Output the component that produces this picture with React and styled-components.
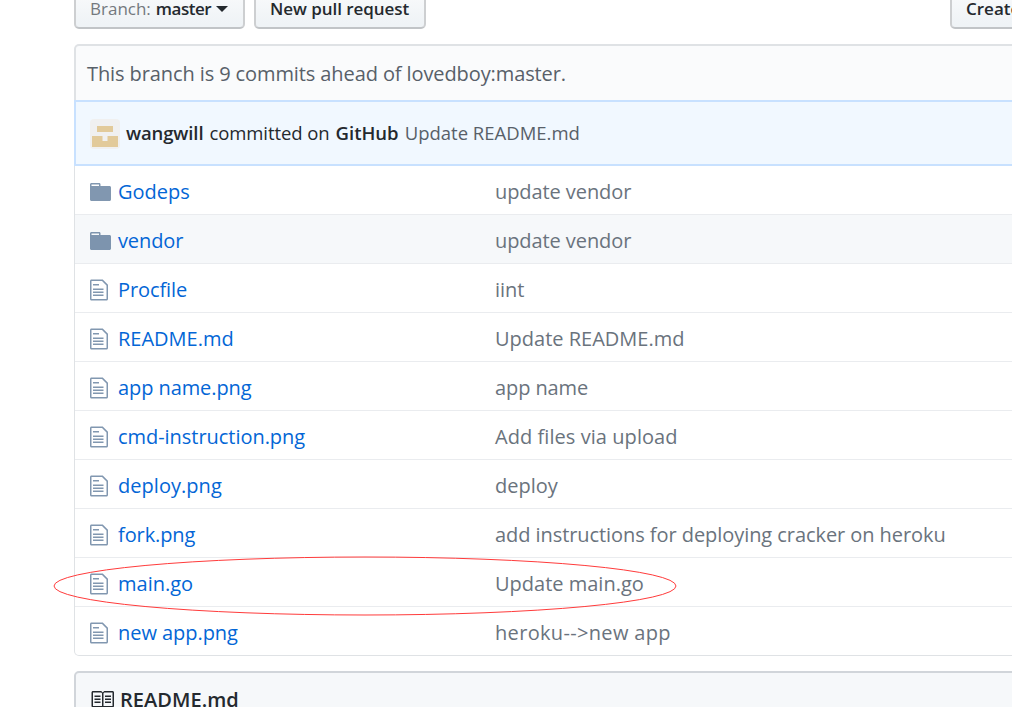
import React from 'react';
import styled, { createGlobalStyle } from 'styled-components';

const GlobalStyle = createGlobalStyle`
  * { box-sizing: border-box; }
  html, body { margin: 0; background: #fff; }
  body {
    width: 1012px;
    height: 707px;
    overflow: hidden;
    font-family: "Segoe UI", "Open Sans", "Noto Sans", sans-serif;
    font-size: 20px;
    color: #24292e;
  }
`;

const Page = styled.main`
  position: relative;
  width: 1012px;
  height: 707px;
  padding-left: 74px;
  overflow: hidden;
`;

const Toolbar = styled.div`
  display: flex;
  align-items: flex-end;
  gap: 9px;
  height: 29px;
`;

const Button = styled.button`
  display: flex;
  flex: none;
  align-items: center;
  width: ${(p) => p.$width}px;
  height: 42px;
  margin: 0 ${(p) => (p.$end ? '-24px' : '0')} 0 ${(p) => (p.$end ? 'auto' : '0')};
  padding: 1px 0 0 14px;
  border: 2px solid #cdcfd1;
  border-bottom-color: #c1c4c7;
  border-radius: 5px;
  background: linear-gradient(180deg, #fafbfc, #eff3f6 90%);
  color: #24292e;
  font: 600 17px/24px "Segoe UI", "Open Sans", "Noto Sans", sans-serif;
  white-space: nowrap;
`;

const ButtonLabel = styled.span`
  letter-spacing: ${(p) => p.$track || 0}px;
  font-weight: ${(p) => (p.$muted ? 400 : 600)};
  color: ${(p) => (p.$muted ? '#74797e' : '#24292e')};
  margin-right: ${(p) => p.$gap || 0}px;
`;

const Caret = styled.span`
  border: 6px solid transparent;
  border-top-color: #24292e;
  border-bottom: 0;
`;

const Panel = styled.section`
  width: 980px;
  margin-top: 15px;
`;

const Notice = styled.div`
  height: 56px;
  padding: 0 0 0 11px;
  border: 2px solid #dfe2e5;
  border-bottom: 0;
  border-radius: 5px 5px 0 0;
  background: #fafbfc;
  color: #586069;
  line-height: 56px;
  letter-spacing: -0.1px;
`;

const Commit = styled.div`
  display: flex;
  align-items: center;
  height: 66px;
  padding-left: 14px;
  border: 2px solid #c8e1ff;
  background: #f1f8ff;
  font-size: 18.5px;
`;

const Avatar = styled.svg`
  flex: none;
  width: 30px;
  height: 30px;
  margin: 2px 6px 0 0;
`;

const Phrase = styled.span`
  padding-bottom: 2px;
  letter-spacing: ${(p) => p.$track || 0}px;
  font-weight: ${(p) => (p.$strong ? 600 : 400)};
  color: ${(p) => (p.$muted ? '#586069' : '#24292e')};
  margin-right: 6px;
  white-space: nowrap;
`;

const Files = styled.div`
  border: 1px solid #dfe2e5;
  border-top: 0;
  border-radius: 0 0 5px 5px;
`;

const Row = styled.div`
  display: grid;
  grid-template-columns: 28px 377px 1fr;
  height: 49px;
  padding-left: 15px;
  border-bottom: 1px solid #eaecef;
  background: ${(p) => (p.$active ? '#f6f8fa' : 'transparent')};
  line-height: 52px;
  white-space: nowrap;
  &:last-child {
    height: 48px;
    border-bottom: 0;
  }
`;

const Icon = styled.svg`
  display: block;
  width: ${(p) => p.$width}px;
  height: 24px;
  margin-top: 14px;
  fill: rgba(3, 47, 98, 0.5);
`;

const FileLink = styled.a`
  color: #0366d6;
  letter-spacing: ${(p) => p.$track || 0}px;
`;

const Message = styled.span`
  color: #6a737d;
  letter-spacing: ${(p) => p.$track || 0}px;
`;

const Readme = styled.section`
  display: flex;
  width: 980px;
  height: 60px;
  margin-top: 15px;
  padding: 14px 0 0 14px;
  border: 2px solid #d1d5da;
  border-radius: 5px;
  background: #f6f8fa;
`;

const BookIcon = styled.svg`
  width: 24px;
  height: 24px;
  margin: 1px 6px 0 0;
  fill: #24292e;
`;

const ReadmeTitle = styled.h3`
  margin: 0;
  font-size: 20px;
  font-weight: 600;
  line-height: 26px;
  letter-spacing: 0.05px;
`;

const Highlight = styled.svg`
  position: absolute;
  left: 53px;
  top: 556px;
  width: 624px;
  height: 60px;
  fill: none;
  stroke: #ff3b3b;
  stroke-width: 1;
`;

const FILE =
  'M6 5H2V4h4v1zM2 8h7V7H2v1zm0 2h7V9H2v1zm0 2h7v-1H2v1zm10-7.5V14c0 .55-.45 1-1 1H1c-.55 0-1-.45-1-1V2c0-.55.45-1 1-1h7.5L12 4.5zM11 5L8 2H1v12h10V5z';
const FOLDER =
  'M13 4H7V3c0-.66-.31-1-1-1H1c-.55 0-1 .45-1 1v10c0 .55.45 1 1 1h12c.55 0 1-.45 1-1V5c0-.55-.45-1-1-1zM6 4H1V3h5v1z';
const BOOK =
  'M3 5h4v1H3V5zm0 3h4V7H3v1zm0 2h4V9H3v1zm11-5h-4v1h4V5zm0 2h-4v1h4V7zm0 2h-4v1h4V9zm2-6v9c0 .55-.45 1-1 1H9.5l-1 1-1-1H2c-.55 0-1-.45-1-1V3c0-.55.45-1 1-1h5.5l1 1 1-1H15c.55 0 1 .45 1 1zm-8 .5L7.5 3H2v9h6V3.5zm7-.5H9.5l-.5.5V12h6V3z';

const files = [
  { name: 'Godeps', message: 'update vendor', folder: true, messageTrack: -0.08 },
  { name: 'vendor', message: 'update vendor', folder: true, active: true, nameTrack: -0.12, messageTrack: -0.08 },
  { name: 'Procfile', message: 'iint', nameTrack: -0.1 },
  { name: 'README.md', message: 'Update README.md' },
  { name: 'app name.png', message: 'app name', nameTrack: -0.08, messageTrack: -0.1 },
  { name: 'cmd-instruction.png', message: 'Add files via upload', nameTrack: -0.04, messageTrack: 0.06 },
  { name: 'deploy.png', message: 'deploy', nameTrack: 0.04 },
  { name: 'fork.png', message: 'add instructions for deploying cracker on heroku', nameTrack: -0.1, messageTrack: -0.065 },
  { name: 'main.go', message: 'Update main.go' },
  { name: 'new app.png', message: 'heroku-->new app', nameTrack: -0.05, messageTrack: 0.33 },
];

export default function App() {
  return (
    <>
      <GlobalStyle />
      <Page>
        <Toolbar>
          <Button $width={171}>
            <ButtonLabel $muted $gap={5}>Branch:</ButtonLabel>
            <ButtonLabel $track={-0.5} $gap={5}>master</ButtonLabel>
            <Caret />
          </Button>
          <Button $width={172}>
            <ButtonLabel $track={-0.05}>New pull request</ButtonLabel>
          </Button>
          <Button $end $width={86}>
            <ButtonLabel>Create</ButtonLabel>
          </Button>
        </Toolbar>
        <Panel>
          <Notice>
            <span>This branch is 9 commits ahead of lovedboy:master.</span>
          </Notice>
          <Commit>
            <Avatar viewBox="0 0 30 30">
              <rect width="30" height="30" rx="4" fill="#f0f0f0" />
              <path d="M7 7h16v6H7zM2 17h10.5v5h5v-5H28v11H2z" fill="#e2ca9a" />
            </Avatar>
            <Phrase $strong $track={-0.12}>wangwill</Phrase>
            <Phrase $track={-0.08}>committed on</Phrase>
            <Phrase $strong>GitHub</Phrase>
            <Phrase $muted>Update README.md</Phrase>
          </Commit>
          <Files>
            {files.map((f) => (
              <Row key={f.name} $active={f.active}>
                <Icon $width={f.folder ? 21 : 18} viewBox={f.folder ? '0 0 14 16' : '0 0 12 16'}>
                  <path d={f.folder ? FOLDER : FILE} />
                </Icon>
                <FileLink $track={f.nameTrack}>{f.name}</FileLink>
                <Message $track={f.messageTrack}>{f.message}</Message>
              </Row>
            ))}
          </Files>
        </Panel>
        <Readme>
          <BookIcon viewBox="0 0 16 16">
            <path d={BOOK} />
          </BookIcon>
          <ReadmeTitle>README.md</ReadmeTitle>
        </Readme>
        <Highlight viewBox="0 0 624 60">
          <ellipse cx="312" cy="30" rx="311" ry="29" />
        </Highlight>
      </Page>
    </>
  );
}
